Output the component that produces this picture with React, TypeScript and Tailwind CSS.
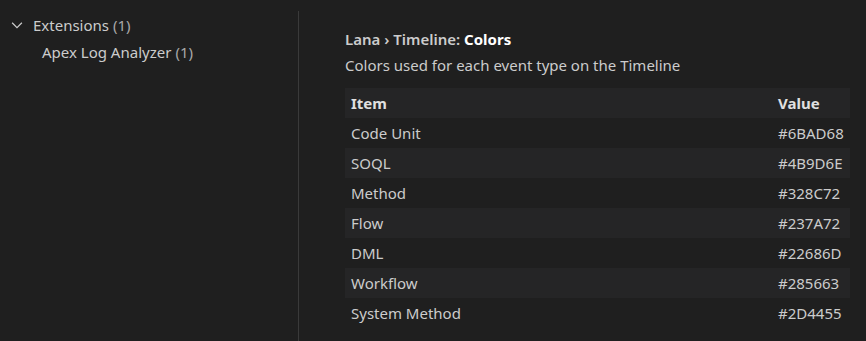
import React from 'react';

const rows: [string, string][] = [
  ['Code Unit', '#6BAD68'],
  ['SOQL', '#4B9D6E'],
  ['Method', '#328C72'],
  ['Flow', '#237A72'],
  ['DML', '#22686D'],
  ['Workflow', '#285663'],
  ['System Method', '#2D4455'],
];

const App: React.FC = () => {
  return (
    <div
      className="flex h-[341px] w-[866px] overflow-hidden bg-[#1f1f1f] text-[15px] text-[#cccccc]"
      style={{ fontFamily: '"Noto Sans", "Open Sans", sans-serif' }}
    >
      {/* tree of setting groups */}
      <div className="w-[298px] shrink-0 pt-[12px]">
        <div className="flex h-[26px] items-center pl-[11px]">
          <svg width="12" height="12" viewBox="0 0 16 16" className="mr-[10px] text-[#cccccc]">
            <path d="M1.5 5 8 11.5 14.5 5" fill="none" stroke="currentColor" strokeWidth="1.6" />
          </svg>
          <span>Extensions <span className="text-[#a8a8a8]">(1)</span></span>
        </div>
        <div className="flex h-[28px] items-center pl-[42px]">
          Apex Log Analyzer <span className="ml-1 text-[#a8a8a8]">(1)</span>
        </div>
      </div>

      <div className="mt-[11px] w-px shrink-0 bg-[#3a3a3a]" />

      {/* setting detail */}
      <div className="flex-1 pl-[46px] pr-[16px] pt-[27px]">
        <div className="font-semibold leading-[24px]">
          Lana › Timeline: <span className="font-bold text-white">Colors</span>
        </div>
        <div className="mt-[3px] leading-[22px]">Colors used for each event type on the Timeline</div>
        <div className="mt-[12px] w-[505px]">
          <div className="flex h-[30px] items-center bg-[#252526] font-bold text-[#e0e0e0]">
            <div className="flex-1 pl-[6px]">Item</div>
            <div className="w-[78px] pl-[6px]">Value</div>
          </div>
          {rows.map(([item, value], i) => (
            <div
              key={item}
              className={`flex h-[30px] items-center ${i % 2 === 1 ? 'bg-[#252526]' : 'bg-[#1f1f1f]'}`}
            >
              <div className="flex-1 pl-[6px]">{item}</div>
              <div className="w-[78px] pl-[6px]">{value}</div>
            </div>
          ))}
        </div>
      </div>
    </div>
  );
};

export default App;
